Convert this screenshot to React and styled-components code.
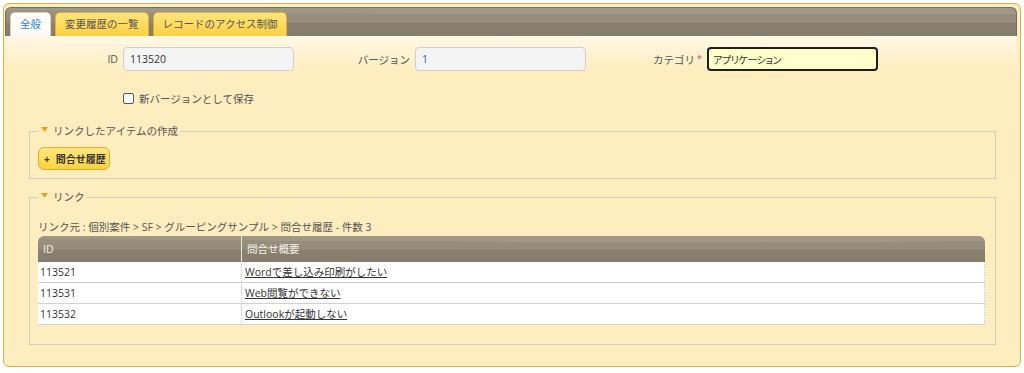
import React from 'react';
import styled, { createGlobalStyle } from 'styled-components';

const Global = createGlobalStyle`
  body {
    margin: 0;
    background: #fff;
    font-family: "Open Sans", "Noto Sans CJK JP", sans-serif;
    font-size: 10.5px;
    color: #555;
  }
`;

const barGradient = `
  radial-gradient(ellipse 160% 70% at 70% -20%, #a09886 0 60%, transparent 61%),
  linear-gradient(to bottom, #9a9281 0%, #948b7a 50%, #8a806f 55%, #867c6b 100%)
`;

const Frame = styled.div`
  margin: 3px;
  width: 1018px;
  height: 364px;
  box-sizing: border-box;
  border: 1px solid #e0b048;
  border-radius: 6px;
  background: #feedbf;
  padding: 3px 3px 0 1px;
  overflow: hidden;
`;

const TabBar = styled.div`
  height: 29px;
  box-sizing: border-box;
  display: flex;
  align-items: flex-end;
  gap: 4px;
  padding-left: 4px;
  border: 1px solid #756c5d;
  border-bottom: none;
  border-radius: 6px 6px 0 0;
  background: ${barGradient};
`;

const Tab = styled.div`
  height: 24px;
  box-sizing: border-box;
  line-height: 22px;
  padding: 0 9px;
  border-radius: 5px 5px 0 0;
  border: 1px solid ${p => (p.$active ? '#d9d1bf' : '#e4b232')};
  border-bottom: none;
  background: ${p =>
    p.$active
      ? 'linear-gradient(to bottom, #ffffff, #fffaf0)'
      : 'linear-gradient(to bottom, #ffe47e, #ffd03f)'};
  color: ${p => (p.$active ? '#2f7fd3' : '#555')};
  white-space: nowrap;
`;

const Panel = styled.div`
  background: linear-gradient(to bottom, #fff8e6 0, #feedbf 34px);
  padding: 11px 0 0 3px;
`;

const FormRow = styled.div`
  display: grid;
  grid-template-columns: repeat(3, 292px);
`;

const Field = styled.div`
  display: flex;
  align-items: center;
  gap: 5px;
`;

const Label = styled.label`
  width: 110px;
  text-align: right;
  color: #555;
  white-space: nowrap;
`;

const Required = styled.span`
  color: #e03a3a;
  font-size: 9px;
  margin-left: 2px;
  position: relative;
  top: -2px;
`;

const Input = styled.input`
  width: 171px;
  height: 24px;
  box-sizing: border-box;
  margin: 0;
  padding: 0 ${p => (p.$focus ? '4px' : '6px')};
  border: ${p => (p.$focus ? '2px solid #1e1e1e' : '1px solid #cfcfcf')};
  border-radius: 4px;
  background: ${p => (p.$focus ? '#ffffcc' : '#f4f4f4')};
  font-family: inherit;
  font-size: ${p => (p.$focus ? '10px' : '10.5px')};
  font-feature-settings: ${p => (p.$focus ? '"palt"' : 'normal')};
  letter-spacing: ${p => (p.$focus ? '-0.4px' : '0')};
  color: ${p => p.$tone || '#333'};
  outline: none;
`;

const CheckRow = styled.div`
  margin-top: 20px;
  padding-left: 115px;
  height: 14px;
  display: flex;
  align-items: center;
  gap: 5px;
  color: #555;
`;

const CheckBox = styled.span`
  width: 11px;
  height: 11px;
  box-sizing: border-box;
  border: 1px solid #555;
  border-radius: 2px;
  background: #fff;
`;

const Group = styled.fieldset`
  margin: ${p => p.$top}px 21px 0 21px;
  padding: ${p => p.$pad};
  border: 1px solid #d3cdbb;
  min-width: 0;
`;

const Legend = styled.legend`
  padding: 0 2px;
  line-height: 12px;
  display: flex;
  align-items: flex-start;
  gap: 5px;
  color: #555;
`;

const Arrow = styled.svg`
  margin-top: 2px;
  margin-left: 1px;
`;

const AddButton = styled.button`
  height: 23px;
  box-sizing: border-box;
  margin: 10px 0 0 0;
  padding: 0 3px 0 5px;
  display: flex;
  align-items: center;
  gap: 6px;
  border: 1px solid #e0ae2e;
  border-radius: 6px;
  background: linear-gradient(to bottom, #ffe67f, #ffd23c);
  font-family: inherit;
  font-size: 10px;
  font-weight: 700;
  color: #333;
`;

const Crumb = styled.div`
  margin-top: 17px;
  line-height: 14px;
  color: #555;
`;

const Table = styled.div`
  margin-top: 2px;
  width: 947px;
`;

const HeadRow = styled.div`
  display: grid;
  grid-template-columns: 203px 1fr;
  height: 26px;
  border-radius: 6px 6px 0 0;
  background: ${barGradient};
`;

const HeadCell = styled.div`
  padding-left: 5px;
  line-height: 26px;
  color: #f5f1e8;
  border-left: ${p => (p.$first ? 'none' : '1px solid #ebe5d8')};
`;

const Row = styled.div`
  display: grid;
  grid-template-columns: 203px 1fr;
  height: 21px;
  box-sizing: border-box;
  background: #fff;
  border-bottom: 1px solid #d2d2d2;
  border-right: 1px dotted #c8c8c8;
`;

const Cell = styled.div`
  padding-left: ${p => (p.$first ? '2px' : '3px')};
  line-height: 21px;
  color: #333;
  border-left: ${p => (p.$first ? 'none' : '1px dotted #c8c8c8')};
`;

const RowLink = styled.a`
  color: #333;
  text-decoration: underline;
`;

const rows = [
  { id: '113521', title: 'Wordで差し込み印刷がしたい' },
  { id: '113531', title: 'Web閲覧ができない' },
  { id: '113532', title: 'Outlookが起動しない' },
];

const Triangle = () => (
  <Arrow width="7" height="5" viewBox="0 0 7 5">
    <path d="M0 0 L7 0 L3.5 5 Z" fill="#e6a21a" />
  </Arrow>
);

export default function App() {
  return (
    <>
      <Global />
      <Frame>
        <TabBar>
          <Tab $active>全般</Tab>
          <Tab>変更履歴の一覧</Tab>
          <Tab>レコードのアクセス制御</Tab>
        </TabBar>
        <Panel>
          <FormRow>
            <Field>
              <Label>ID</Label>
              <Input readOnly defaultValue="113520" />
            </Field>
            <Field>
              <Label>バージョン</Label>
              <Input readOnly defaultValue="1" $tone="#2f5f8f" />
            </Field>
            <Field>
              <Label>
                カテゴリ<Required>*</Required>
              </Label>
              <Input readOnly defaultValue="アプリケーション" $focus />
            </Field>
          </FormRow>
          <CheckRow>
            <CheckBox />
            <span>新バージョンとして保存</span>
          </CheckRow>

          <Group $top={20} $pad="0 10px 8px 8px">
            <Legend>
              <Triangle />
              <span>リンクしたアイテムの作成</span>
            </Legend>
            <AddButton>
              <span>+</span>
              <span>問合せ履歴</span>
            </AddButton>
          </Group>

          <Group $top={12} $pad="0 10px 19px 8px">
            <Legend>
              <Triangle />
              <span>リンク</span>
            </Legend>
            <Crumb>リンク元 : 個別案件 &gt; SF &gt; グルーピングサンプル &gt; 問合せ履歴 - 件数 3</Crumb>
            <Table>
              <HeadRow>
                <HeadCell $first>ID</HeadCell>
                <HeadCell>問合せ概要</HeadCell>
              </HeadRow>
              {rows.map(r => (
                <Row key={r.id}>
                  <Cell $first>{r.id}</Cell>
                  <Cell>
                    <RowLink href="#">{r.title}</RowLink>
                  </Cell>
                </Row>
              ))}
            </Table>
          </Group>
        </Panel>
      </Frame>
    </>
  );
}
